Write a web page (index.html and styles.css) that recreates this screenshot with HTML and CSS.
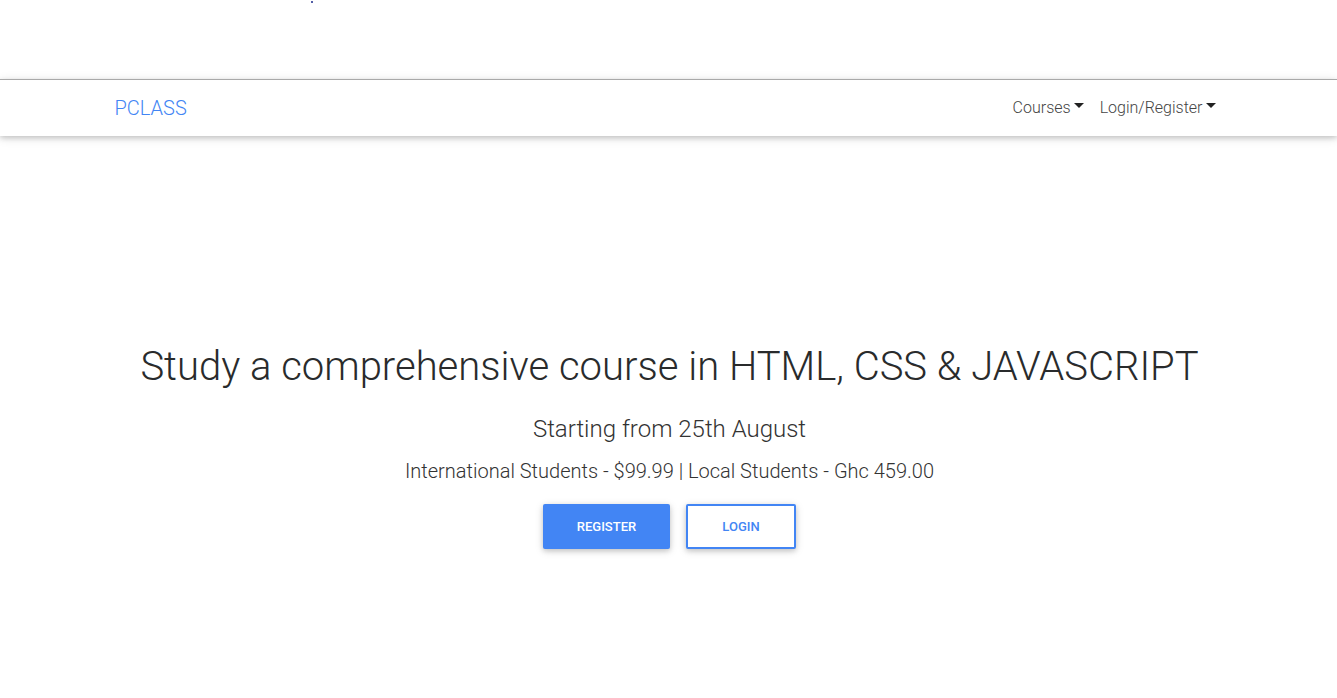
FILE: index.html
```html
<!DOCTYPE html>
<html>
<head>
<meta charset="utf-8">
<link rel="stylesheet" href="styles.css">
</head>
<body>
<div class="top">
  <span class="dot"></span>
</div>
<nav class="navbar">
  <div class="container nav-inner">
    <a class="brand" href="#">PCLASS</a>
    <ul class="nav">
      <li><a class="nav-link" href="#">Courses<span class="caret"></span></a></li>
      <li><a class="nav-link" href="#">Login/Register<span class="caret"></span></a></li>
    </ul>
  </div>
</nav>
<section class="hero">
  <h1 class="title">Study a comprehensive course in HTML, CSS &amp; JAVASCRIPT</h1>
  <p class="sub">Starting from 25th August</p>
  <p class="lead">International Students - $99.99 | Local Students - Ghc 459.00</p>
  <div class="actions">
    <a class="btn btn-primary" href="#">REGISTER</a>
    <a class="btn btn-outline" href="#">LOGIN</a>
  </div>
</section>
</body>
</html>
```
FILE: styles.css
```css
* { box-sizing: border-box; }
html, body { margin: 0; padding: 0; }
body {
  font-family: Roboto, "Liberation Sans", sans-serif;
  font-weight: 300;
  color: #212529;
  background: #fff;
  height: 698px;
  overflow: hidden;
}
a { text-decoration: none; }
.top {
  height: 79px;
  position: relative;
}
.dot {
  position: absolute;
  left: 311px;
  top: 1px;
  width: 2px;
  height: 2px;
  background: #1a2a8a;
  border-radius: 50%;
}
.navbar {
  border-top: 1px solid #a9a9a9;
  height: 57px;
  background: #fff;
  box-shadow: 0 2px 5px 0 rgba(0,0,0,.16), 0 2px 10px 0 rgba(0,0,0,.12);
  position: relative;
  z-index: 2;
}
.container {
  width: 1140px;
  margin: 0 auto;
  padding: 0 15px;
}
.nav-inner {
  height: 55px;
  display: flex;
  align-items: center;
  justify-content: space-between;
}
.brand {
  color: #4285f4;
  font-size: 20px;
  font-weight: 300;
  margin-left: 1px;
}
.nav {
  list-style: none;
  margin: 0;
  padding: 0;
  display: flex;
}
.nav-link {
  display: flex;
  align-items: center;
  color: #444;
  font-size: 16px;
  font-weight: 300;
  padding: 0 8px;
}
.caret {
  display: inline-block;
  margin-left: 3px;
  width: 0;
  height: 0;
  border-left: 5px solid transparent;
  border-right: 5px solid transparent;
  border-top: 5px solid #222;
  position: relative;
  top: -2px;
}
.hero {
  padding-top: 207px;
  padding-left: 2px;
  text-align: center;
}
.title {
  margin: 0;
  font-size: 40px;
  font-weight: 300;
  line-height: 48px;
  color: #292b2c;
}
.sub {
  margin: 22px 0 0;
  font-size: 24px;
  line-height: 32px;
  color: #333;
}
.lead {
  margin: 11px 0 0;
  font-size: 20px;
  line-height: 30px;
  color: #333;
}
.actions {
  margin-top: 18px;
  display: flex;
  justify-content: center;
  gap: 16px;
}
.btn {
  display: inline-flex;
  align-items: center;
  justify-content: center;
  height: 45px;
  font-size: 13px;
  font-weight: 500;
  border-radius: 2px;
  box-shadow: 0 2px 5px 0 rgba(0,0,0,.16), 0 2px 10px 0 rgba(0,0,0,.12);
}
.btn-primary {
  width: 127px;
  background: #4285f4;
  color: #fff;
}
.btn-outline {
  width: 110px;
  background: #fff;
  border: 2px solid #4285f4;
  color: #4285f4;
}
```
